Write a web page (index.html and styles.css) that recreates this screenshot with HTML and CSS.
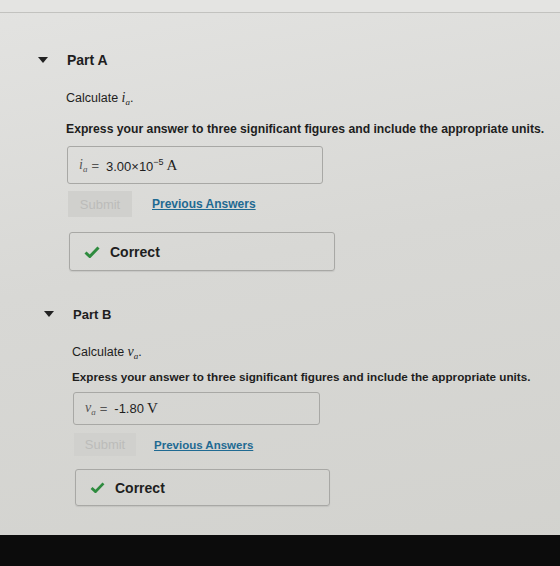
FILE: index.html
```html
<!DOCTYPE html>
<html lang="en">
    <head>
        <meta charset="UTF-8">
        <title>Parts A and B</title>
        <link rel="stylesheet" href="styles.css">
    </head>

    <body class="page">
        <div class="page__strip"></div>

        <section class="part part--a">
            <header class="part__title">
                <span class="part__toggle"></span>
                <span class="part__label">Part A</span>
            </header>

            <p class="part__prompt">Calculate <span class="math">i<sub>a</sub></span>.</p>
            <p class="part__hint">Express your answer to three significant figures and include the appropriate units.</p>

            <div class="part__answer">
                <span class="math math--light">i<sub>a</sub></span>
                <span class="part__answer__eq">=</span>
                <span class="part__answer__value">3.00×10<sup>−5</sup></span>
                <span class="math math--unit">A</span>
            </div>

            <div class="part__actions">
                <span class="part__submit">Submit</span>
                <a class="part__previous" href="#">Previous Answers</a>
            </div>

            <div class="part__feedback">
                <svg class="part__check" viewBox="0 0 16 12" width="16" height="12">
                    <path d="M1.5 6.5 L5.8 10.5 L14.5 1.5" fill="none" stroke="#2e8b3e" stroke-width="3" stroke-linejoin="miter"/>
                </svg>
                <span class="part__feedback__text">Correct</span>
            </div>
        </section>

        <section class="part part--b">
            <header class="part__title">
                <span class="part__toggle"></span>
                <span class="part__label">Part B</span>
            </header>

            <p class="part__prompt">Calculate <span class="math">v<sub>a</sub></span>.</p>
            <p class="part__hint">Express your answer to three significant figures and include the appropriate units.</p>

            <div class="part__answer">
                <span class="math math--light">v<sub>a</sub></span>
                <span class="part__answer__eq">=</span>
                <span class="part__answer__value">-1.80</span>
                <span class="math math--unit">V</span>
            </div>

            <div class="part__actions">
                <span class="part__submit">Submit</span>
                <a class="part__previous" href="#">Previous Answers</a>
            </div>

            <div class="part__feedback">
                <svg class="part__check" viewBox="0 0 16 12" width="15" height="11">
                    <path d="M1.5 6.5 L5.8 10.5 L14.5 1.5" fill="none" stroke="#2e8b3e" stroke-width="3" stroke-linejoin="miter"/>
                </svg>
                <span class="part__feedback__text">Correct</span>
            </div>
        </section>

        <div class="page__bezel"></div>
    </body>
</html>
```

FILE: styles.css
```css
html,
body {
    border: none;
    height: 100%;
    margin: 0 0 0 0;
    padding: 0 0 0 0;
    width: 100%;
}

:root {
    --color-page: #d8d8d5;
    --color-page-light: #e3e3e1;
    --color-border: #a8a8a5;
    --color-text: #1e1e1e;
    --color-link: #1f6a92;
    --color-bezel: #0c0c0c;
}

.page {
    background: linear-gradient(170deg, var(--color-page-light) 0%, var(--color-page) 45%, #d2d2ce 100%);
    color: var(--color-text);
    font-family: "Liberation Sans", Arial, sans-serif;
    overflow: hidden;
    position: relative;
}

.page__strip {
    background-color: #e4e4e2;
    border-bottom: 1px solid #c2c2bf;
    height: 12px;
}

.page__bezel {
    background-color: var(--color-bezel);
    bottom: 0;
    height: 31px;
    left: 0;
    position: absolute;
    right: 0;
}

.part {
    padding-left: 38px;
}

.part--b {
    padding-left: 44px;
}

.part__title {
    align-items: center;
    display: flex;
    height: 20px;
}

.part__toggle {
    border-left: 5px solid transparent;
    border-right: 5px solid transparent;
    border-top: 6px solid #222;
    height: 0;
    width: 0;
}

.part__label {
    font-size: 14px;
    font-weight: bold;
    margin-left: 19px;
}

.part__prompt,
.part__hint {
    font-size: 12.5px;
    line-height: 18px;
    margin: 0 0 0 28px;
    white-space: nowrap;
}

.part__hint {
    font-size: 12.2px;
    font-weight: bold;
}

.math {
    font-family: "Liberation Serif", "Times New Roman", serif;
    font-size: 14px;
    font-style: italic;
}

.math sub {
    font-size: 9px;
    vertical-align: -3px;
}

.math--light {
    color: #555;
}

.math--unit {
    font-size: 15px;
    font-style: normal;
    margin-left: 3px;
}

.part__answer {
    align-items: center;
    border: 1px solid var(--color-border);
    border-radius: 3px;
    box-sizing: border-box;
    display: flex;
    font-size: 13px;
    margin-left: 29px;
    padding-left: 11px;
    width: 256px;
}

.part__answer__eq {
    color: #555;
    margin: 0 7px 0 4px;
}

.part__answer__value sup {
    font-size: 9px;
    vertical-align: 6px;
}

.part__actions {
    align-items: center;
    display: flex;
    margin-left: 30px;
}

.part__submit {
    align-items: center;
    background-color: #d0d0cd;
    color: #bcbcba;
    display: flex;
    font-size: 13px;
    justify-content: center;
    width: 64px;
}

.part__previous {
    color: var(--color-link);
    font-size: 12px;
    font-weight: bold;
    margin-left: 20px;
}

.part__feedback {
    align-items: center;
    border: 1px solid var(--color-border);
    border-radius: 3px;
    box-shadow: 0 1px 1px rgba(0, 0, 0, 0.08);
    box-sizing: border-box;
    display: flex;
    margin-left: 31px;
    padding-left: 14px;
    width: 266px;
}

.part__feedback__text {
    font-size: 14px;
    font-weight: bold;
    margin-left: 10px;
}

/* Part A spacing */
.part--a .part__title {
    margin-top: 37px;
}

.part--a .part__prompt {
    margin-top: 19px;
}

.part--a .part__hint {
    margin-top: 9px;
}

.part--a .part__answer {
    height: 38px;
    margin-top: 8px;
}

.part--a .part__actions {
    margin-top: 7px;
}

.part--a .part__submit {
    height: 26px;
}

.part--a .part__feedback {
    height: 39px;
    margin-top: 15px;
}

/* Part B spacing, a touch narrower */
.part--b .part__title {
    margin-top: 33px;
}

.part--b .part__label {
    font-size: 13px;
    margin-left: 19px;
}

.part--b .part__prompt {
    margin-top: 19px;
}

.part--b .part__hint {
    font-size: 11.7px;
    margin-top: 3px;
}

.part--b .part__answer {
    height: 33px;
    margin-top: 6px;
    width: 247px;
}

.part--b .part__actions {
    margin-top: 8px;
}

.part--b .part__submit {
    height: 23px;
    width: 62px;
}

.part--b .part__previous {
    font-size: 11.5px;
    margin-left: 18px;
}

.part--b .part__feedback {
    height: 37px;
    margin-top: 13px;
    width: 255px;
}
```
